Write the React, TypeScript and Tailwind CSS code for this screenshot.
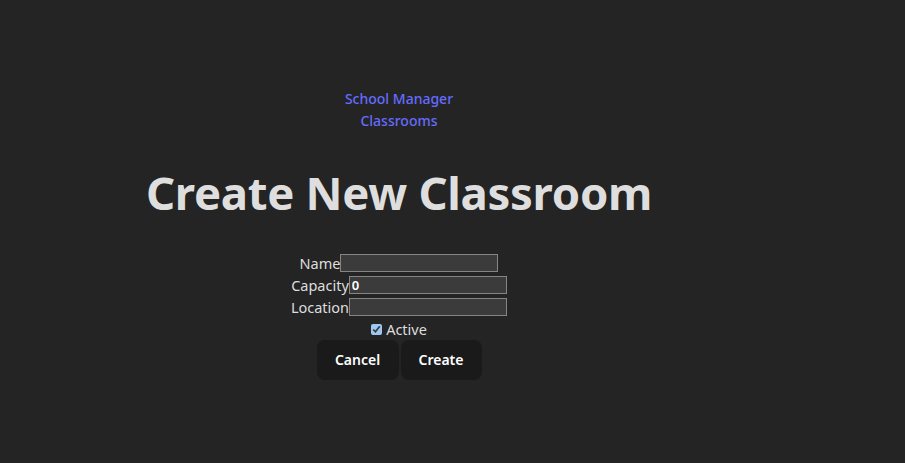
import { useState } from 'react'

export default function App() {
  const [name, setName] = useState('')
  const [capacity, setCapacity] = useState('0')
  const [location, setLocation] = useState('')
  const [active, setActive] = useState(true)

  return (
    <div
      className="min-h-screen flex items-center bg-[#242424] text-[#dedede]"
      style={{ fontFamily: '"Noto Sans", "Open Sans", sans-serif' }}
    >
      <div className="w-[798px] pt-[5px] text-center">
        <nav className="flex flex-col items-center text-[14px] font-medium leading-[22px] text-[#646cff]">
          <a href="#">School Manager</a>
          <a href="#">Classrooms</a>
        </nav>

        <h1 className="mt-[32px] text-[45.5px] font-bold leading-[56px] tracking-[-0.3px]">
          Create New Classroom
        </h1>

        <form className="mt-[32px] flex flex-col items-center text-[14.5px] leading-[22px]">
          <div className="flex items-center">
            <label htmlFor="name">Name</label>
            <input
              id="name"
              value={name}
              onChange={(e) => setName(e.target.value)}
              className="w-[158px] h-[18px] bg-[#3b3b3b] border border-[#858585] text-[13px] px-[2px] text-white outline-none"
            />
          </div>
          <div className="flex items-center">
            <label htmlFor="capacity">Capacity</label>
            <input
              id="capacity"
              value={capacity}
              onChange={(e) => setCapacity(e.target.value)}
              className="w-[158px] h-[18px] bg-[#3b3b3b] border border-[#858585] text-[13px] font-semibold px-[2px] text-white outline-none"
            />
          </div>
          <div className="flex items-center">
            <label htmlFor="location">Location</label>
            <input
              id="location"
              value={location}
              onChange={(e) => setLocation(e.target.value)}
              className="w-[158px] h-[18px] bg-[#3b3b3b] border border-[#858585] text-[13px] px-[2px] text-white outline-none"
            />
          </div>
          <div className="flex items-center gap-[4px]">
            <input
              id="active"
              type="checkbox"
              checked={active}
              onChange={(e) => setActive(e.target.checked)}
              className="w-[11px] h-[11px] accent-[#9ec8f4]"
            />
            <label htmlFor="active">Active</label>
          </div>
          <div className="flex gap-[2px]">
            <button
              type="button"
              className="w-[82px] h-[40px] rounded-[8px] bg-[#1a1a1a] text-white text-[14px] font-semibold"
            >
              Cancel
            </button>
            <button
              type="submit"
              className="w-[81px] h-[40px] rounded-[8px] bg-[#1a1a1a] text-white text-[14px] font-semibold"
            >
              Create
            </button>
          </div>
        </form>
      </div>
    </div>
  )
}
